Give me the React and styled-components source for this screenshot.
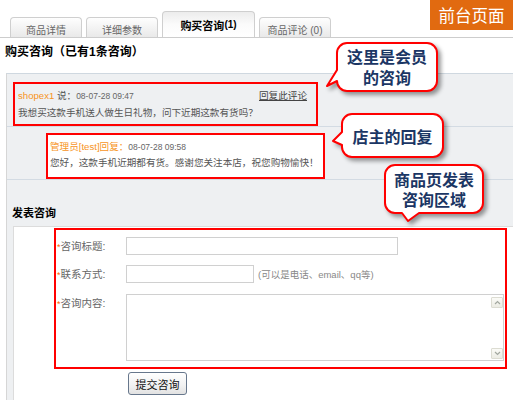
import React from "react";
import styled, { createGlobalStyle } from "styled-components";

const GlobalStyle = createGlobalStyle`
  html, body {
    margin: 0;
    padding: 0;
    background: #fff;
  }
  body {
    font-family: "Liberation Sans", "Noto Sans CJK SC", sans-serif;
    font-size: 10px;
    color: #333;
  }
`;

const Page = styled.div`
  position: relative;
  width: 513px;
  height: 400px;
  overflow: hidden;
  display: flex;
  flex-direction: column;
  background: #fff;
`;

/* ---------- tabs ---------- */
const TabBar = styled.div`
  flex: none;
  height: 38px;
  box-sizing: border-box;
  border-bottom: 1px solid #cdcdcd;
  display: flex;
  align-items: flex-end;
  gap: 4px;
  padding-left: 10px;
`;

const Tab = styled.div`
  box-sizing: border-box;
  width: ${(p) => p.$w}px;
  height: ${(p) => (p.$active ? 26 : 20)}px;
  padding-top: ${(p) => (p.$active ? 0 : 3)}px;
  border: 1px solid #cfcfcf;
  border-bottom: none;
  border-radius: 4px 4px 0 0;
  background: ${(p) =>
    p.$active
      ? "linear-gradient(#ececec, #fbfbfb 50%, #fff)"
      : "linear-gradient(#fefefe, #e9e9e9)"};
  display: flex;
  align-items: center;
  justify-content: center;
  color: ${(p) => (p.$active ? "#000" : "#666")};
  font-size: ${(p) => (p.$active ? 11 : 10)}px;
  font-weight: ${(p) => (p.$active ? "bold" : "normal")};
  white-space: nowrap;
`;

const Count = styled.span`
  font-size: 10px;
`;

const Badge = styled.div`
  position: absolute;
  top: 0;
  right: 0;
  width: 83px;
  height: 30px;
  background: #e16a10;
  color: #fff;
  font-family: "Noto Sans CJK SC", sans-serif;
  font-size: 16.5px;
  display: flex;
  align-items: center;
  justify-content: center;
`;

/* ---------- consult list ---------- */
const Heading = styled.h2`
  flex: none;
  margin: 0;
  padding: 6px 0 0 5px;
  height: 16px;
  line-height: 16px;
  font-size: 12px;
  font-weight: bold;
  color: #000;
`;

const Panel = styled.div`
  flex: 1;
  margin: 13px 0 0 6px;
  border-left: 1px solid #d6d6d6;
  border-top: 1px solid #cfd8e0;
  background: #eef0f2;
  display: flex;
  flex-direction: column;
`;

const MemberRow = styled.div`
  padding: 8px 0 0 6px;
  border-bottom: 1px solid #d3dbe3;
`;

const ReplyRow = styled.div`
  padding: 6px 0 0 39px;
  border-bottom: 1px solid #d3dbe3;
`;

const MarkBox = styled.div`
  box-sizing: border-box;
  width: ${(p) => p.$w}px;
  height: ${(p) => p.$h}px;
  border: 2px solid #ff0000;
  background: ${(p) => (p.$white ? "#fff" : "transparent")};
  padding: ${(p) => p.$pad};
`;

const MetaLine = styled.div`
  display: flex;
  justify-content: space-between;
  align-items: baseline;
  height: 16px;
  line-height: 16px;
  font-size: 9.6px;
  color: #555;
`;

const Author = styled.span`
  color: #f7941d;
  font-size: 9.6px;
`;

const Date = styled.span`
  font-size: 8.5px;
  color: #666;
`;

const ReplyLink = styled.a`
  color: #444;
  text-decoration: underline;
  font-size: 9.6px;
`;

const Message = styled.div`
  margin-top: ${(p) => p.$gap || 0}px;
  height: 16px;
  line-height: 16px;
  font-size: 9.6px;
  color: #555;
  white-space: nowrap;
`;

/* ---------- post form ---------- */
const FormSection = styled.div`
  flex: 1;
  display: flex;
  flex-direction: column;
`;

const SectionTitle = styled.div`
  padding: 25px 0 0 5px;
  height: 16px;
  line-height: 16px;
  font-size: 11px;
  font-weight: bold;
  color: #000;
`;

const FormPanel = styled.div`
  flex: 1;
  margin: 5px 0 0 6px;
  padding: 1px 0 0 40px;
  background: #fff;
  border-top: 1px solid #dcdcdc;
  border-left: 1px solid #dcdcdc;
`;

const FormGrid = styled.div`
  box-sizing: border-box;
  width: 453px;
  height: 141px;
  border: 2px solid #ff0000;
  padding-top: 7px;
  display: grid;
  grid-template-columns: 70px 1fr;
  grid-template-rows: 18px 18px 67px;
  row-gap: 10px;
  align-content: start;
`;

const Label = styled.div`
  line-height: 18px;
  padding-left: 1px;
  font-size: 10.5px;
  color: #666;
  white-space: nowrap;
  margin-top: ${(p) => p.$shift || 0}px;
`;

const Star = styled.span`
  color: #f60;
  font-size: 9px;
`;

const Field = styled.input`
  box-sizing: border-box;
  width: ${(p) => p.$w}px;
  height: 18px;
  margin: 0;
  padding: 0 3px;
  border: 1px solid #d0d0d0;
  background: #fff;
  outline: none;
`;

const Inline = styled.div`
  display: flex;
  align-items: center;
`;

const Hint = styled.span`
  margin-left: 4px;
  font-size: 9.5px;
  color: #888;
`;

const TextBox = styled.div`
  box-sizing: border-box;
  width: 378px;
  height: 67px;
  margin-top: 1px;
  border: 1px solid #d0d0d0;
  background: #fff;
  display: flex;
  justify-content: flex-end;
`;

const ScrollBar = styled.div`
  width: 12px;
  padding: 2px 0 1px;
  display: flex;
  flex-direction: column;
  justify-content: space-between;
`;

const ArrowBtn = styled.div`
  box-sizing: border-box;
  width: 12px;
  height: 11px;
  border: 1px solid #dcdcd2;
  border-radius: 1px;
  background: linear-gradient(#fbfbf7, #ececE4);
  display: flex;
  align-items: center;
  justify-content: center;
`;

const SubmitRow = styled.div`
  margin: 3px 0 0 74px;
`;

const Submit = styled.button`
  box-sizing: border-box;
  width: 59px;
  height: 23px;
  border: 1px solid #67778c;
  border-radius: 3px;
  background: linear-gradient(#ffffff, #f1f1f1 60%, #e2e2e2);
  font-family: "Liberation Sans", "Noto Sans CJK SC", sans-serif;
  font-size: 11px;
  color: #111;
  padding: 0;
`;

/* ---------- callouts ---------- */
const Callout = styled.div`
  position: absolute;
  left: ${(p) => p.$x}px;
  top: ${(p) => p.$y}px;
  width: ${(p) => p.$w}px;
  height: ${(p) => p.$h}px;
  display: flex;
  align-items: center;
  justify-content: center;
`;

const CalloutShape = styled.svg`
  position: absolute;
  left: 0;
  top: 0;
  overflow: visible;
  filter: drop-shadow(3px 3px 2px rgba(0, 0, 0, 0.4));
`;

const CalloutText = styled.div`
  position: relative;
  text-align: center;
  font-family: "Noto Sans CJK SC", sans-serif;
  font-weight: bold;
  font-size: 16px;
  line-height: ${(p) => p.$lh}px;
  color: #1b3664;
`;

function bubblePath(w, h, tail) {
  const r = 10;
  let d = `M${r},0 H${w - r} A${r},${r} 0 0 1 ${w},${r} V${h - r} A${r},${r} 0 0 1 ${w - r},${h}`;
  if (tail.side === "bottom") {
    d += ` H${tail.b} L${tail.tx},${tail.ty} L${tail.a},${h}`;
  }
  d += ` H${r} A${r},${r} 0 0 1 0,${h - r}`;
  if (tail.side === "left") {
    d += ` V${tail.b} L${tail.tx},${tail.ty} L0,${tail.a}`;
  }
  d += ` V${r} A${r},${r} 0 0 1 ${r},0 Z`;
  return d;
}

const callouts = [
  {
    x: 337, y: 43, w: 100, h: 48, lh: 21,
    tail: { side: "left", b: 38, tx: -10, ty: 43, a: 27 },
    lines: ["这里是会员", "的咨询"],
  },
  {
    x: 342, y: 114, w: 101, h: 43, lh: 20,
    tail: { side: "left", b: 31, tx: -9, ty: 27, a: 18 },
    lines: ["店主的回复"],
  },
  {
    x: 385, y: 165, w: 98, h: 48, lh: 20,
    tail: { side: "bottom", b: 34, tx: 23, ty: 56, a: 17 },
    lines: ["商品页发表", "咨询区域"],
  },
];

function Callouts() {
  return callouts.map((c) => (
    <Callout key={c.lines[0]} $x={c.x} $y={c.y} $w={c.w} $h={c.h}>
      <CalloutShape width={c.w} height={c.h}>
        <path d={bubblePath(c.w, c.h, c.tail)} fill="#fff" stroke="#ff0000" strokeWidth="2" strokeLinejoin="round" />
      </CalloutShape>
      <CalloutText $lh={c.lh}>
        {c.lines.map((l) => (
          <div key={l}>{l}</div>
        ))}
      </CalloutText>
    </Callout>
  ));
}

function Arrow({ up }) {
  return (
    <svg width="7" height="5" viewBox="0 0 7 5">
      <path d={up ? "M1 4 L3.5 1.5 L6 4" : "M1 1 L3.5 3.5 L6 1"} fill="none" stroke="#a3a8a0" strokeWidth="1.2" />
    </svg>
  );
}

export default function App() {
  return (
    <Page>
      <GlobalStyle />
      <TabBar>
        <Tab $w={72}>商品详情</Tab>
        <Tab $w={72}>详细参数</Tab>
        <Tab $w={93} $active>
          购买咨询<Count>(1)</Count>
        </Tab>
        <Tab $w={72}>商品评论 (0)</Tab>
      </TabBar>
      <Badge>前台页面</Badge>

      <Heading>购买咨询（已有1条咨询）</Heading>

      <Panel>
        <MemberRow>
          <MarkBox $w={305} $h={44} $pad="1px 9px 0 3px">
            <MetaLine style={{ paddingTop: 3 }}>
              <span>
                <Author>shopex1</Author> 说：<Date>08-07-28 09:47</Date>
              </span>
              <ReplyLink>回复此评论</ReplyLink>
            </MetaLine>
            <Message $gap={1}>我想买这款手机送人做生日礼物，问下近期这款有货吗？</Message>
          </MarkBox>
        </MemberRow>

        <ReplyRow>
          <MarkBox $w={279} $h={46} $white $pad="4px 0 0 2px">
            <MetaLine>
              <span>
                <Author>管理员[test]回复：</Author>
                <Date>08-07-28 09:58</Date>
              </span>
            </MetaLine>
            <Message>您好，这款手机近期都有货。感谢您关注本店，祝您购物愉快！</Message>
          </MarkBox>
        </ReplyRow>

        <FormSection>
          <SectionTitle>发表咨询</SectionTitle>
          <FormPanel>
            <FormGrid>
              <Label>
                <Star>*</Star>咨询标题:
              </Label>
              <Field $w={272} readOnly />
              <Label>
                <Star>*</Star>联系方式:
              </Label>
              <Inline>
                <Field $w={128} readOnly />
                <Hint>(可以是电话、email、qq等)</Hint>
              </Inline>
              <Label $shift={1}>
                <Star>*</Star>咨询内容:
              </Label>
              <TextBox>
                <ScrollBar>
                  <ArrowBtn>
                    <Arrow up />
                  </ArrowBtn>
                  <ArrowBtn>
                    <Arrow />
                  </ArrowBtn>
                </ScrollBar>
              </TextBox>
            </FormGrid>
            <SubmitRow>
              <Submit>提交咨询</Submit>
            </SubmitRow>
          </FormPanel>
        </FormSection>
      </Panel>

      <Callouts />
    </Page>
  );
}
